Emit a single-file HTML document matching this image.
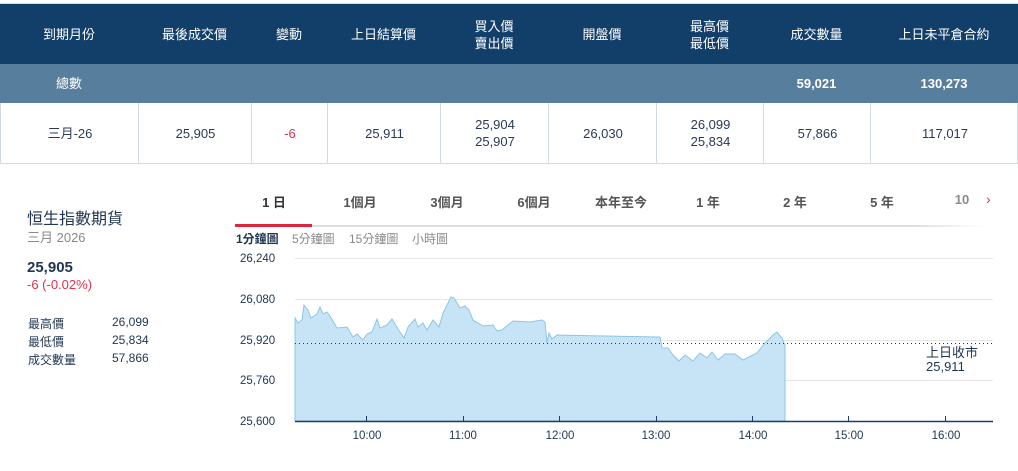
<!DOCTYPE html>
<html><head><meta charset="utf-8"><style>
*{margin:0;padding:0;box-sizing:border-box}
body{width:1018px;height:471px;background:#fff;font-family:"Liberation Sans","Noto Sans CJK TC",sans-serif;position:relative;overflow:hidden;color:#1f3550}
.a{position:absolute;white-space:nowrap}
.hd{position:absolute;top:3px;height:61px;left:0;width:1018px;background:#123f6a;border-top:1px solid #d6dde5}
.tot{position:absolute;top:64px;height:39px;left:0;width:1018px;background:#577e9c}
.row{position:absolute;top:103px;height:61px;left:0;width:1018px;border:1px solid #d0dbe5;border-top:none}
.c{position:absolute;text-align:center;display:flex;align-items:center;justify-content:center;font-size:13px;line-height:17px}
.hd .c{color:#fff;height:61px;top:0}
.tot .c{color:#fff;height:39px;top:0;font-weight:bold}
.row .c{color:#2a3a55;height:60px;top:0}
.v{position:absolute;top:0;width:1px;height:60px;background:#d0dbe5}
.tab{position:absolute;top:192px;font-size:13px;font-weight:bold;color:#555;transform:translateX(-50%)}
.st{position:absolute;top:230px;font-size:12px;color:#888}
.sl{position:absolute;left:28px;font-size:12px;color:#1f3550}
.sv{position:absolute;left:112px;font-size:12px;color:#1f3550}
.yl{position:absolute;left:240px;font-size:11.5px;color:#1f3550}
.xl{position:absolute;top:430px;font-size:11.5px;color:#1f3550;transform:translateX(-50%)}
</style></head><body>
<div class="hd">
<div class="c" style="left:0;width:138px">到期月份</div>
<div class="c" style="left:138px;width:113px">最後成交價</div>
<div class="c" style="left:251px;width:76px">變動</div>
<div class="c" style="left:327px;width:113px">上日結算價</div>
<div class="c" style="left:440px;width:108px">買入價<br>賣出價</div>
<div class="c" style="left:548px;width:108px">開盤價</div>
<div class="c" style="left:656px;width:107px">最高價<br>最低價</div>
<div class="c" style="left:763px;width:107px">成交數量</div>
<div class="c" style="left:870px;width:148px">上日未平倉合約</div>
</div>
<div class="tot">
<div class="c" style="left:0;width:138px;font-weight:normal">總數</div>
<div class="c" style="left:763px;width:107px">59,021</div>
<div class="c" style="left:870px;width:148px">130,273</div>
</div>
<div class="row">
<div class="v" style="left:137px"></div><div class="v" style="left:250px"></div><div class="v" style="left:326px"></div><div class="v" style="left:439px"></div><div class="v" style="left:547px"></div><div class="v" style="left:655px"></div><div class="v" style="left:762px"></div><div class="v" style="left:869px"></div>
<div class="c" style="left:0;width:138px">三月-26</div>
<div class="c" style="left:138px;width:113px">25,905</div>
<div class="c" style="left:251px;width:76px;color:#e0304a">-6</div>
<div class="c" style="left:327px;width:113px">25,911</div>
<div class="c" style="left:440px;width:108px">25,904<br>25,907</div>
<div class="c" style="left:548px;width:108px">26,030</div>
<div class="c" style="left:656px;width:107px">26,099<br>25,834</div>
<div class="c" style="left:763px;width:107px">57,866</div>
<div class="c" style="left:870px;width:148px">117,017</div>
</div>

<div class="a" style="left:27px;top:205px;font-size:16px;color:#1f3550">恒生指數期貨</div>
<div class="a" style="left:27px;top:227px;font-size:13px;color:#888">三月 2026</div>
<div class="a" style="left:27px;top:259px;font-size:15px;font-weight:bold;color:#1f3550">25,905</div>
<div class="a" style="left:27px;top:277px;font-size:13px;color:#e0304a">-6 (-0.02%)</div>
<div class="sl" style="top:315px">最高價</div><div class="sv" style="top:315px">26,099</div>
<div class="sl" style="top:333px">最低價</div><div class="sv" style="top:333px">25,834</div>
<div class="sl" style="top:351px">成交數量</div><div class="sv" style="top:351px">57,866</div>

<div class="tab" style="left:274px;color:#333">1 日</div>
<div class="tab" style="left:360px">1個月</div>
<div class="tab" style="left:447px">3個月</div>
<div class="tab" style="left:534px">6個月</div>
<div class="tab" style="left:621px">本年至今</div>
<div class="tab" style="left:708px">1 年</div>
<div class="tab" style="left:795px">2 年</div>
<div class="tab" style="left:882px">5 年</div>
<div class="tab" style="left:962px;color:#888">10</div>
<div class="a" style="left:986px;top:191px;font-size:14px;color:#e0304a">›</div>
<div class="a" style="left:235px;top:225px;width:750px;height:2px;background:linear-gradient(to right,#ddd 90%,#fff)"></div>
<div class="a" style="left:235px;top:224px;width:77px;height:3px;background:#e0263f"></div>
<div class="st" style="left:236px;color:#1f3550;font-weight:bold">1分鐘圖</div>
<div class="st" style="left:292px">5分鐘圖</div>
<div class="st" style="left:349px">15分鐘圖</div>
<div class="st" style="left:412px">小時圖</div>

<div class="yl" style="top:253px">26,240</div>
<div class="yl" style="top:294px">26,080</div>
<div class="yl" style="top:335px">25,920</div>
<div class="yl" style="top:375px">25,760</div>
<div class="yl" style="top:416px">25,600</div>

<svg class="a" style="left:0;top:0" width="1018" height="471">
<g stroke="#e6e6e6" stroke-width="1">
<line x1="295" y1="258.5" x2="993" y2="258.5"/>
<line x1="295" y1="299.5" x2="993" y2="299.5"/>
<line x1="295" y1="340.5" x2="993" y2="340.5"/>
<line x1="295" y1="380.5" x2="993" y2="380.5"/>
</g>
<path fill="#c6e4f5" stroke="#8cc6e6" stroke-width="1" d="M295,318 L298,323 302,320 304,305 308,310 311,318 317,314 320,307 323,314 327,312 330,316 337,328 347,327 353,337 357,334 363,340 367,334 372,332 377,319 380,328 387,325 392,319 398,329 404,338 408,327 415,319 418,327 423,323 427,330 433,320 439,327 443,313 451,297 454,298 460,308 465,306 469,310 473,320 483,326 493,325 497,331 502,330 513,321 530,322 542,320 545,322 547,343 549,333 552,339 557,335 657,337 660,337 662,348 668,348 673,355 679,361 685,355 693,361 700,353 707,358 712,352 718,360 725,354 735,354 743,360 757,353 765,343 773,335 777,332 782,338 784,343 785,345 L785,421 L295,421 Z"/>
<line x1="295" y1="343.5" x2="993" y2="343.5" stroke="#333" stroke-width="1" stroke-dasharray="1,3"/>
<line x1="295" y1="421.5" x2="993" y2="421.5" stroke="#1a3d66" stroke-width="1.5"/>
<g stroke="#1a3d66" stroke-width="1">
<line x1="366.5" y1="416" x2="366.5" y2="421"/><line x1="463.5" y1="416" x2="463.5" y2="421"/><line x1="559.5" y1="416" x2="559.5" y2="421"/><line x1="656.5" y1="416" x2="656.5" y2="421"/><line x1="752.5" y1="416" x2="752.5" y2="421"/><line x1="848.5" y1="416" x2="848.5" y2="421"/><line x1="945.5" y1="416" x2="945.5" y2="421"/>
</g>
</svg>
<div class="a" style="left:926px;top:346px;font-size:13px;color:#1f3550;line-height:14px">上日收市<br>25,911</div>
<div class="xl" style="left:367px">10:00</div>
<div class="xl" style="left:463px">11:00</div>
<div class="xl" style="left:560px">12:00</div>
<div class="xl" style="left:656px">13:00</div>
<div class="xl" style="left:753px">14:00</div>
<div class="xl" style="left:849px">15:00</div>
<div class="xl" style="left:946px">16:00</div>
</body></html>
